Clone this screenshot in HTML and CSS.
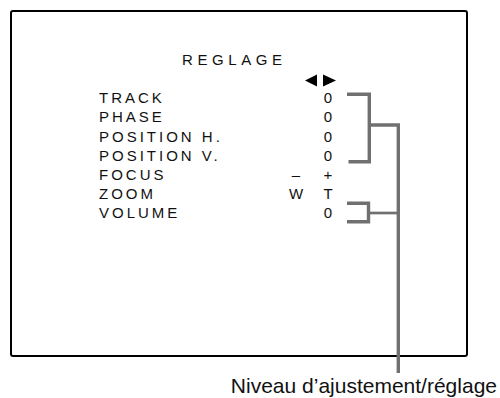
FILE: index.html
```html
<!DOCTYPE html>
<html lang="fr">
<head>
    <meta charset="UTF-8">
    <meta name="viewport" content="width=device-width, initial-scale=1.0">
    <title>Reglage</title>
    <link rel="stylesheet" href="styles.css">
</head>
<body>

    <div class="screen">
        <h2 class="title">REGLAGE</h2>
        <div class="menu">
            <span class="label"></span>
            <svg class="arrows" width="52" height="19" viewBox="0 0 52 19">
                <polygon points="31,5.5 31,17.5 19,11.5" fill="#000"/>
                <polygon points="37,5.5 37,17.5 50,11.5" fill="#000"/>
            </svg>

            <span class="label">TRACK</span><span class="low"></span><span class="val">0</span>
            <span class="label">PHASE</span><span class="low"></span><span class="val">0</span>
            <span class="label">POSITION H.</span><span class="low"></span><span class="val">0</span>
            <span class="label">POSITION V.</span><span class="low"></span><span class="val">0</span>
            <span class="label">FOCUS</span><span class="low">–</span><span class="val">+</span>
            <span class="label">ZOOM</span><span class="low">W</span><span class="val">T</span>
            <span class="label">VOLUME</span><span class="low"></span><span class="val">0</span>
        </div>
    </div>

    <p class="caption">Niveau d’ajustement/réglage</p>

    <!-- callout lines -->
    <svg class="callout" width="500" height="398" viewBox="0 0 500 398">
        <g fill="none" stroke="#707070" stroke-width="3.4">
            <path d="M347 94.3 H369.3 V161.8 H348.5"/>
            <path d="M369.3 125 H398.3 V373"/>
            <path d="M347 203.3 H368.5 V221.7 H347"/>
        </g>
        <path d="M368.5 213 H398.3" stroke="#707070" stroke-width="2.7"/>
    </svg>

</body>
</html>
```

FILE: styles.css
```css
/* Global */
body {
    font-family: "Liberation Sans", Arial, sans-serif;
    background: #fff;
    color: #111;
    margin: 0;
    padding: 0;
    width: 500px;
    height: 398px;
    position: relative;
    overflow: hidden;
}

/* Screen frame */
.screen {
    box-sizing: border-box;
    width: 458px;
    height: 347px;
    margin: 10px 0 0 10px;
    border: 2px solid #000;
    border-radius: 3px;
    padding: 38px 0 0 87px;
}

.title {
    margin: 0 0 0 83px;
    font-size: 15px;
    font-weight: normal;
    line-height: 19.2px;
    letter-spacing: 4.6px;
}

/* Menu rows */
.menu {
    display: grid;
    grid-template-columns: 187px 20px 12px 20px;
    font-size: 15px;
    line-height: 19.2px;
}

.label {
    grid-column: 1;
    letter-spacing: 3px;
    white-space: nowrap;
}

.arrows {
    grid-column: 2 / 5;
    display: block;
}

.low {
    grid-column: 2;
    text-align: center;
}

.val {
    grid-column: 4;
    text-align: center;
}

/* Caption */
.caption {
    margin: 17px 3px 0 0;
    text-align: right;
    font-size: 21px;
    color: #111;
}

.callout {
    position: absolute;
    top: 0;
    left: 0;
    pointer-events: none;
}
```
